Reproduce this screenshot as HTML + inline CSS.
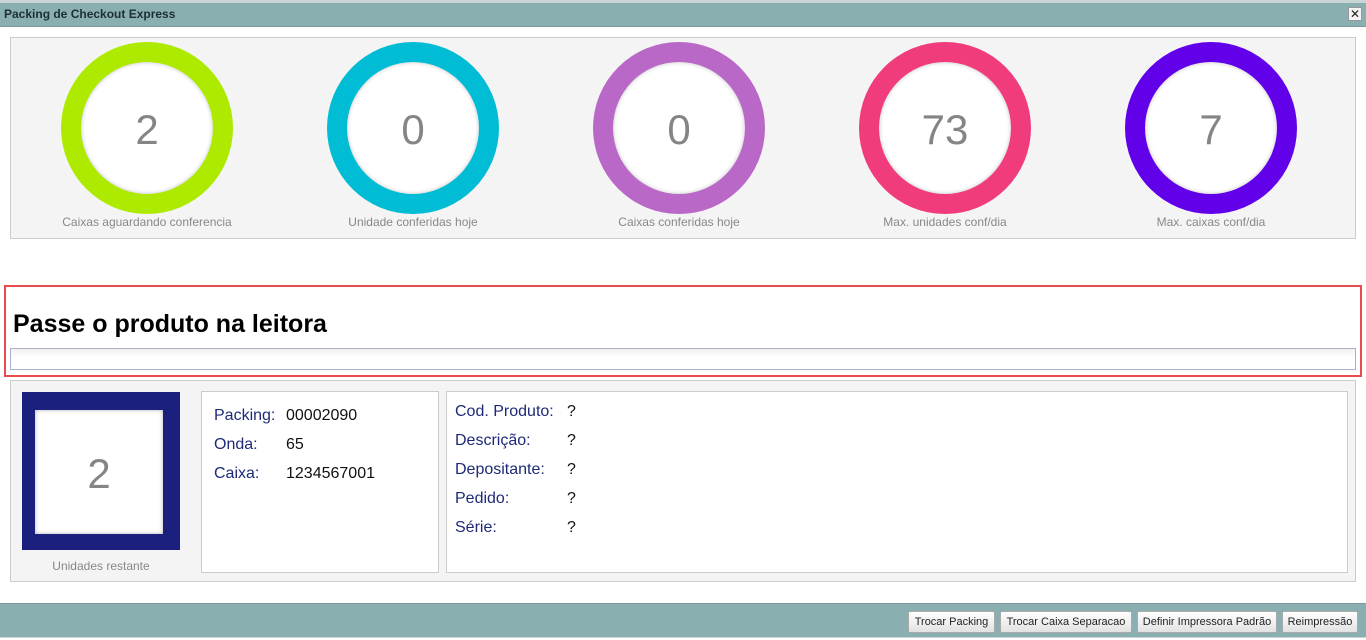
<!DOCTYPE html>
<html><head><meta charset="utf-8"><style>
*{margin:0;padding:0;box-sizing:border-box}
body{width:1366px;height:640px;background:#fff;position:relative;overflow:hidden;font-family:"Liberation Sans",sans-serif}
.a{position:absolute}
.ring{position:absolute;width:172px;height:172px;border-radius:50%;top:42px}
.in{position:absolute;left:20px;top:20px;width:132px;height:132px;border-radius:50%;background:#fff;box-shadow:inset 0 0 4px rgba(0,0,0,.25);text-align:center;line-height:136px;font-size:42px;color:#858585}
.lbl{position:absolute;top:215px;width:266px;text-align:center;font-size:12px;color:#888}
.t{position:absolute;font-size:16px;color:#1e2a78}
.v{position:absolute;font-size:16px;color:#111}
.btn{position:absolute;top:611px;height:22px;border:1px solid #aaa;background:linear-gradient(#fff,#e2e2e2);font-size:11px;color:#222;text-align:center;line-height:20px;border-radius:2px;white-space:nowrap;overflow:hidden}
</style></head><body>
<div class="a" style="left:0;top:0;width:1366px;height:3px;background:#c9d4d5"></div>
<div class="a" style="left:0;top:3px;width:1366px;height:24px;background:#8aafb1;border-bottom:1px solid #7a9799"></div>
<div class="a" style="left:4px;top:7px;font-size:12px;font-weight:bold;color:#1d2f33">Packing de Checkout Express</div>
<div class="a" style="left:1348px;top:7px;width:14px;height:14px;background:#f4f4f4;border:1px solid #999;font-size:12px;line-height:12px;text-align:center;color:#222">✕</div>

<div class="a" style="left:10px;top:37px;width:1346px;height:202px;background:#f4f4f4;border:1px solid #ccc"></div>
<div class="ring" style="left:61px;background:#aeea00"><div class="in">2</div></div>
<div class="ring" style="left:327px;background:#00bcd4"><div class="in">0</div></div>
<div class="ring" style="left:593px;background:#ba68c8"><div class="in">0</div></div>
<div class="ring" style="left:859px;background:#f03c7c"><div class="in">73</div></div>
<div class="ring" style="left:1125px;background:#6200ea"><div class="in">7</div></div>
<div class="lbl" style="left:14px">Caixas aguardando conferencia</div>
<div class="lbl" style="left:280px">Unidade conferidas hoje</div>
<div class="lbl" style="left:546px">Caixas conferidas hoje</div>
<div class="lbl" style="left:812px">Max. unidades conf/dia</div>
<div class="lbl" style="left:1078px">Max. caixas conf/dia</div>

<div class="a" style="left:4px;top:285px;width:1358px;height:92px;border:2px solid #e84c4c"></div>
<div class="a" style="left:13px;top:310px;font-size:25px;font-weight:bold;color:#000">Passe o produto na leitora</div>
<div class="a" style="left:10px;top:348px;width:1346px;height:22px;border:1px solid #aab0c8;background:linear-gradient(#f0f0f0,#fff 40%)"></div>

<div class="a" style="left:10px;top:380px;width:1346px;height:202px;background:#f4f4f4;border:1px solid #ccc"></div>
<div class="a" style="left:22px;top:392px;width:158px;height:158px;background:#1b1f7e"></div>
<div class="a" style="left:35px;top:410px;width:128px;height:124px;background:#fff;box-shadow:inset 0 0 4px rgba(0,0,0,.3);text-align:center;line-height:128px;font-size:42px;color:#858585">2</div>
<div class="a" style="left:22px;top:559px;width:158px;text-align:center;font-size:12px;color:#888">Unidades restante</div>

<div class="a" style="left:201px;top:391px;width:238px;height:182px;background:#fff;border:1px solid #ccc"></div>
<div class="t" style="left:214px;top:407px">Packing:</div><div class="v" style="left:286px;top:407px">00002090</div>
<div class="t" style="left:214px;top:436px">Onda:</div><div class="v" style="left:286px;top:436px">65</div>
<div class="t" style="left:214px;top:465px">Caixa:</div><div class="v" style="left:286px;top:465px">1234567001</div>

<div class="a" style="left:446px;top:391px;width:902px;height:182px;background:#fff;border:1px solid #ccc"></div>
<div class="t" style="left:455px;top:403px">Cod. Produto:</div><div class="v" style="left:567px;top:403px">?</div>
<div class="t" style="left:455px;top:432px">Descrição:</div><div class="v" style="left:567px;top:432px">?</div>
<div class="t" style="left:455px;top:461px">Depositante:</div><div class="v" style="left:567px;top:461px">?</div>
<div class="t" style="left:455px;top:490px">Pedido:</div><div class="v" style="left:567px;top:490px">?</div>
<div class="t" style="left:455px;top:519px">Série:</div><div class="v" style="left:567px;top:519px">?</div>

<div class="a" style="left:0;top:603px;width:1366px;height:35px;background:#8aafb1;border-top:1px solid #7a9799;border-bottom:1px solid #c9d4d5"></div>
<div class="btn" style="left:908px;width:87px">Trocar Packing</div>
<div class="btn" style="left:1000px;width:132px">Trocar Caixa Separacao</div>
<div class="btn" style="left:1137px;width:140px">Definir Impressora Padrão</div>
<div class="btn" style="left:1282px;width:76px">Reimpressão</div>
</body></html>
